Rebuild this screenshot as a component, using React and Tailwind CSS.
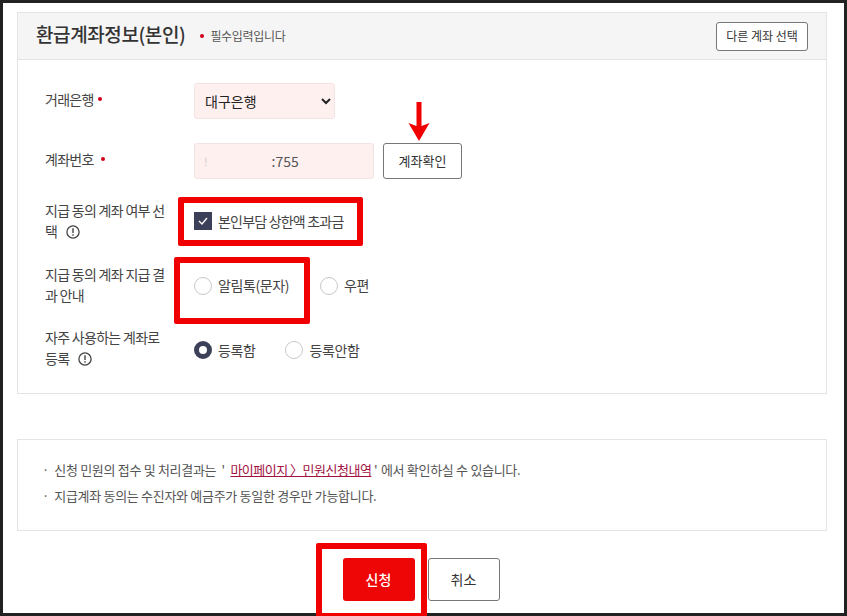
import React from 'react';

const Dot = () => <span className="inline-block w-[4px] h-[4px] rounded-full bg-[#d0021b]" />;

const InfoIcon = () => (
  <svg width="14" height="14" viewBox="0 0 14 14" className="inline-block align-[-2px]">
    <circle cx="7" cy="7" r="6.1" fill="none" stroke="#444" strokeWidth="1.3" />
    <rect x="6.3" y="3.2" width="1.4" height="4.8" fill="#444" />
    <rect x="6.3" y="9.2" width="1.4" height="1.5" fill="#444" />
  </svg>
);

const Radio = ({ label, checked }) => (
  <div className="flex items-center gap-[6px]">
    {checked ? (
      <span className="w-[18px] h-[18px] rounded-full border-[5px] border-[#3d4059] bg-white" />
    ) : (
      <span className="w-[18px] h-[18px] rounded-full border border-[#c9c9c9] bg-white" />
    )}
    <span className="text-[14px] text-[#444] tracking-[-0.4px]">{label}</span>
  </div>
);

const Row = ({ label, className, children }) => (
  <div className={`flex ${className}`}>
    <div className="w-[176px] pl-[27px] pr-[26px] shrink-0 text-[14px] leading-[21px] text-[#444] tracking-[-0.7px] break-all">{label}</div>
    <div className="flex-1 flex items-center">{children}</div>
  </div>
);

export default function App() {
  return (
    <div className="relative w-[847px] h-[616px] bg-white border-t-[3px] border-l-[3px] border-r-[3px] border-b-[3px] border-[#222] pt-[9px] pl-[14px] pr-[17px] [font-family:'Noto_Sans_CJK_KR','Noto_Sans',sans-serif]">
      <div className="border border-[#e4e4e4] h-[382px]">
        <div className="h-[47px] bg-[#f5f5f5] border-b border-[#e4e4e4] flex items-center pl-[18px] pr-[18px]">
          <h2 className="text-[19px] font-medium text-[#333] tracking-[-0.4px] -mt-[3px]">환급계좌정보(본인)</h2>
          <span className="ml-[15px] mr-[6px] flex items-center"><Dot /></span>
          <span className="text-[12px] text-[#555] tracking-[-0.3px]">필수입력입니다</span>
          <button className="ml-auto w-[92px] h-[29px] bg-white border border-[#777] rounded-[3px] text-[12px] text-[#333]">다른 계좌 선택</button>
        </div>

        <div className="pt-[23px]">
          <Row label={<span className="flex items-center h-[32px] gap-[4px]">거래은행<Dot /></span>} className="h-[36px]">
            <select className="w-[141px] h-[36px] pl-[6px] bg-[#fff0f0] border border-[#f3e3e3] rounded-[3px] text-[14px] text-[#222]">
              <option>대구은행</option>
            </select>
          </Row>
          <Row label={<span className="flex items-center h-[32px] gap-[7px]">계좌번호<Dot /></span>} className="h-[36px] mt-[24px]">
            <div className="w-[180px] h-[36px] bg-[#fff0f0] border border-[#f3e3e3] rounded-[3px] flex items-center text-[14px] text-[#555]">
              <span className="ml-[9px] text-[#ccc] text-[11px]">!</span>
              <span className="ml-[64px]">:755</span>
            </div>
            <button className="ml-[9px] w-[79px] h-[36px] bg-white border border-[#777] rounded-[3px] text-[13px] text-[#333]">계좌확인</button>
          </Row>
          <Row
            label={<>지급 동의 계좌 여부 선택 <span className="ml-[6px]"><InfoIcon /></span></>}
            className="h-[42px] mt-[21px]"
          >
            <div className="flex items-center gap-[6px]">
              <span className="w-[18px] h-[18px] bg-[#3d4059] flex items-center justify-center">
                <svg width="12" height="10" viewBox="0 0 12 10">
                  <path d="M2 5l3 3 5-6" fill="none" stroke="#fff" strokeWidth="1.4" />
                </svg>
              </span>
              <span className="text-[14px] text-[#444] tracking-[-0.8px]">본인부담 상한액 초과금</span>
            </div>
          </Row>
          <Row label="지급 동의 계좌 지급 결과 안내" className="h-[42px] mt-[22px]">
            <div className="flex items-center gap-[31px] mt-[1px]">
              <Radio label="알림톡(문자)" />
              <Radio label="우편" />
            </div>
          </Row>
          <Row
            label={<>자주 사용하는 계좌로 등록 <span className="ml-[6px]"><InfoIcon /></span></>}
            className="h-[42px] mt-[21px]"
          >
            <div className="flex items-center gap-[30px] mt-[4px]">
              <Radio label="등록함" checked />
              <Radio label="등록안함" />
            </div>
          </Row>
        </div>
      </div>

      <div className="mt-[45px] h-[92px] border border-[#e4e4e4] pl-[24px] pt-[17px] text-[13px] leading-[26px] text-[#555] tracking-[-0.3px]">
        <p>
          ·&nbsp; 신청 민원의 접수 및 처리결과는 &nbsp;' <a className="ml-[3px] text-[#a3123f] underline tracking-[-0.5px]">마이페이지 〉민원신청내역</a> ' <span className="ml-[1px]">에서 확인하실 수 있습니다.</span>
        </p>
        <p>·&nbsp; 지급계좌 동의는 수진자와 예금주가 동일한 경우만 가능합니다.</p>
      </div>

      <div className="mt-[27px] flex justify-center gap-[13px] pr-[2px]">
        <button className="w-[72px] h-[43px] bg-[#ee0606] rounded-[3px] text-white text-[14px] font-medium">신청</button>
        <button className="w-[72px] h-[43px] bg-white border border-[#777] rounded-[3px] text-[#333] text-[14px]">취소</button>
      </div>

      {/* red annotations drawn over the page */}
      <div className="absolute left-[175px] top-[194px] w-[185px] h-[49px] border-[6px] border-[#f00000] rounded-[2px]" />
      <div className="absolute left-[171px] top-[254px] w-[136px] h-[67px] border-[6px] border-[#f00000] rounded-[2px]" />
      <div className="absolute left-[313px] top-[540px] w-[111px] h-[76px] border-[6px] border-[#f00000] rounded-[2px]" />
      <svg className="absolute left-[404px] top-[99px]" width="24" height="40" viewBox="0 0 24 40">
        <path d="M9.5 0h5v24l8 -3 -10.5 18L1.500 21l8 3z" fill="#f00000" />
      </svg>
    </div>
  );
}
